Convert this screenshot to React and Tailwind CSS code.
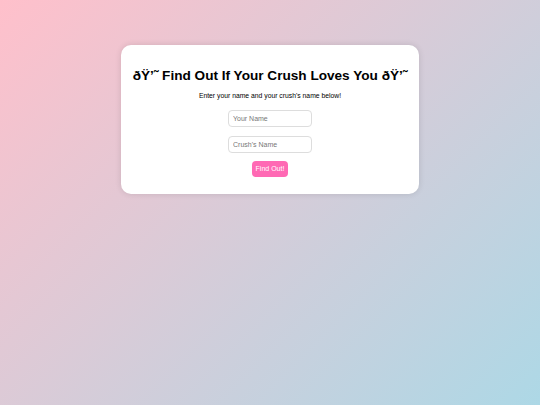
import React, { useState } from 'react';

function App() {
	const [name, setName] = useState('');
	const [crush, setCrush] = useState('');

	return (
		<div className="min-h-[405px] w-full bg-[linear-gradient(135deg,#ffc0cb,#add8e6)] font-['Liberation_Sans',Arial,sans-serif] pt-[45px]">
			<div className="mx-auto w-[298px] h-[149px] bg-white rounded-[10px] shadow-[0_0_6px_rgba(0,0,0,0.12)] flex flex-col items-center pt-[22px]">
				<h1 className="text-[13.6px] font-bold text-black leading-[18px] whitespace-nowrap">ðŸ’˜ Find Out If Your Crush Loves You ðŸ’˜</h1>
				<p className="text-[6.8px] text-black mt-[7px] leading-[8px]">Enter your name and your crush's name below!</p>
				<input
					value={name}
					onChange={(e) => setName(e.target.value)}
					placeholder="Your Name"
					className="mt-[10px] w-[84px] h-[17px] border border-[#ddd] rounded-[4px] px-[4px] text-[7px] placeholder:text-[#777] outline-none"
				/>
				<input
					value={crush}
					onChange={(e) => setCrush(e.target.value)}
					placeholder="Crush's Name"
					className="mt-[9px] w-[84px] h-[17px] border border-[#ddd] rounded-[4px] px-[4px] text-[7px] placeholder:text-[#777] outline-none"
				/>
				<button className="mt-[8px] w-[36px] h-[16px] bg-[#ff69b4] text-white text-[7px] rounded-[4px]">Find Out!</button>
			</div>
		</div>
	);
}

export default App;
